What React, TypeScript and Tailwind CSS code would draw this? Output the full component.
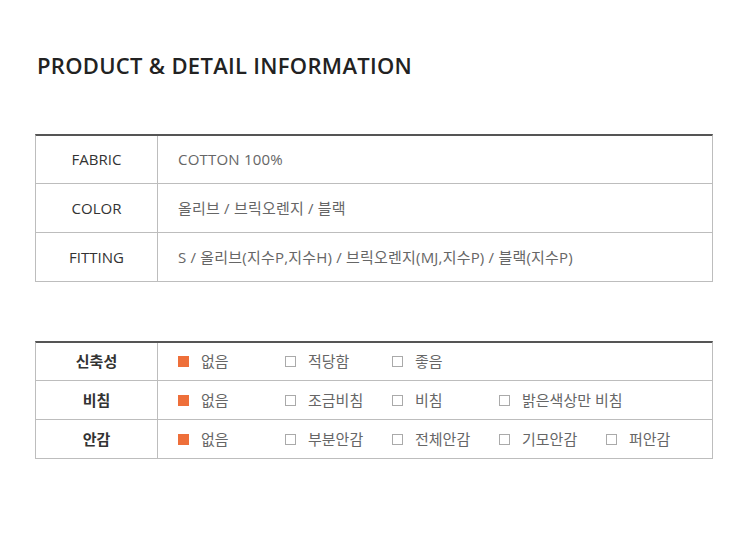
const info = [
  { label: "FABRIC", value: "COTTON 100%" },
  { label: "COLOR", value: "올리브 / 브릭오렌지 / 블랙" },
  { label: "FITTING", value: "S / 올리브(지수P,지수H) / 브릭오렌지(MJ,지수P) / 블랙(지수P)" },
];

const checks = [
  { label: "신축성", options: ["없음", "적당함", "좋음"] },
  { label: "비침", options: ["없음", "조금비침", "비침", "밝은색상만 비침"] },
  { label: "안감", options: ["없음", "부분안감", "전체안감", "기모안감", "퍼안감"] },
];

const font = { fontFamily: '"Open Sans", "Noto Sans CJK KR", sans-serif' };

export default function App() {
  return (
    <div className="min-h-[555px] w-[750px] bg-white pl-[35px] pt-[51px]" style={font}>
      <h1 className="ml-[2px] text-[22px] font-semibold leading-[28px] tracking-[0.3px] text-[#222]">
        PRODUCT &amp; DETAIL INFORMATION
      </h1>

      <div className="mt-[55px] w-[678px] border-x border-b border-t-2 border-x-[#bdbdbd] border-b-[#bdbdbd] border-t-[#555]">
        {info.map((row, i) => (
          <div
            key={row.label}
            className={`flex ${i === 0 ? "h-[47px]" : "h-[49px] border-t border-[#bdbdbd]"}`}
          >
            <div className="flex w-[122px] shrink-0 items-center justify-center border-r border-[#bdbdbd] text-[15px] text-[#333]">
              {row.label}
            </div>
            <div className="flex items-center whitespace-nowrap pl-[20px] text-[15px] tracking-[0.2px] text-[#666]">
              {row.value}
            </div>
          </div>
        ))}
      </div>

      <div className="mt-[59px] w-[678px] border-x border-b border-t-2 border-x-[#bdbdbd] border-b-[#bdbdbd] border-t-[#555]">
        {checks.map((row, i) => (
          <div
            key={row.label}
            className={`flex ${i === 0 ? "h-[37px]" : "h-[39px] border-t border-[#bdbdbd]"}`}
          >
            <div className="flex w-[122px] shrink-0 items-center justify-center border-r border-[#bdbdbd] text-[15px] font-bold text-[#333]">
              {row.label}
            </div>
            <div className="flex items-center pl-[20px]">
              {row.options.map((opt, j) => (
                <div key={opt} className="flex w-[107px] shrink-0 items-center gap-[12px]">
                  {j === 0 ? (
                    <span className="h-[11px] w-[11px] shrink-0 bg-[#ee6f3a]" />
                  ) : (
                    <span className="h-[11px] w-[11px] shrink-0 border border-[#aaa] bg-white" />
                  )}
                  <span className="whitespace-nowrap text-[15px] text-[#666]">{opt}</span>
                </div>
              ))}
            </div>
          </div>
        ))}
      </div>
    </div>
  );
}
